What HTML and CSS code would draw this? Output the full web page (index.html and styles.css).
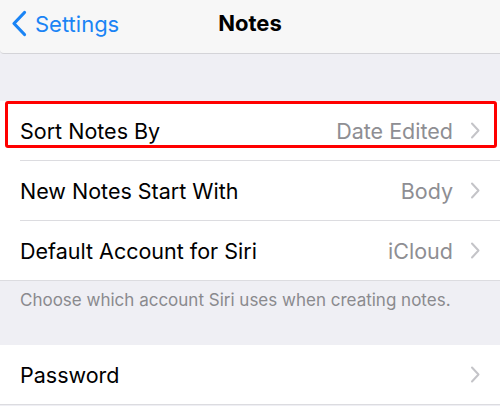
FILE: index.html
```html
<!DOCTYPE html>
<html>
<head>
<meta charset="utf-8">
<link rel="stylesheet" href="styles.css">
</head>
<body>
<header class="navbar">
  <a class="back">
    <svg class="back-icon" width="18" height="28" viewBox="0 0 18 28"><path d="M14.5 2.5 L4 13.5 L14.5 24.5" fill="none" stroke="#1a84f5" stroke-width="3.2" stroke-linecap="round" stroke-linejoin="round"/></svg>
    <span>Settings</span>
  </a>
  <h1 class="title">Notes</h1>
</header>
<div class="spacer"></div>
<section class="group">
  <div class="row">
    <div class="row-inner">
      <span class="label">Sort Notes By</span>
      <span class="value">Date Edited</span>
      <svg class="chev" width="11" height="17" viewBox="0 0 11 17"><path d="M2 1.5 L8.5 8.5 L2 15.5" fill="none" stroke="#c4c4c8" stroke-width="2" stroke-linecap="round" stroke-linejoin="round"/></svg>
    </div>
    <div class="highlight"></div>
  </div>
  <div class="row">
    <div class="row-inner">
      <span class="label">New Notes Start With</span>
      <span class="value">Body</span>
      <svg class="chev" width="11" height="17" viewBox="0 0 11 17"><path d="M2 1.5 L8.5 8.5 L2 15.5" fill="none" stroke="#c4c4c8" stroke-width="2" stroke-linecap="round" stroke-linejoin="round"/></svg>
    </div>
  </div>
  <div class="row last">
    <div class="row-inner">
      <span class="label">Default Account for Siri</span>
      <span class="value">iCloud</span>
      <svg class="chev" width="11" height="17" viewBox="0 0 11 17"><path d="M2 1.5 L8.5 8.5 L2 15.5" fill="none" stroke="#c4c4c8" stroke-width="2" stroke-linecap="round" stroke-linejoin="round"/></svg>
    </div>
  </div>
</section>
<p class="footnote">Choose which account Siri uses when creating notes.</p>
<section class="group">
  <div class="row last">
    <div class="row-inner">
      <span class="label">Password</span>
      <span class="value"></span>
      <svg class="chev" width="11" height="17" viewBox="0 0 11 17"><path d="M2 1.5 L8.5 8.5 L2 15.5" fill="none" stroke="#c4c4c8" stroke-width="2" stroke-linecap="round" stroke-linejoin="round"/></svg>
    </div>
  </div>
</section>
</body>
</html>
```
FILE: styles.css
```css
html, body {
  margin: 0;
  padding: 0;
}
body {
  background: #efeff4;
  font-family: Inter, "Noto Sans", sans-serif;
  width: 500px;
  height: 406px;
  overflow: hidden;
}
.navbar {
  height: 53px;
  background: #f7f7f7;
  border-bottom: 1px solid #d4d4d8;
  display: flex;
  align-items: center;
  justify-content: center;
  position: relative;
  border-bottom-left-radius: 4px;
}
.back {
  position: absolute;
  left: 10px;
  top: 10px;
  display: flex;
  align-items: center;
  gap: 7px;
  color: #1a84f5;
  font-size: 22px;
}
.back-icon {
  display: block;
}
.title {
  margin: 0;
  font-size: 22px;
  font-weight: 700;
  color: #000;
  margin-top: -7px;
}
.spacer {
  height: 47px;
}
.group {
  background: #fff;
}
.row {
  position: relative;
  padding-left: 20px;
}
.row-inner {
  height: 59px;
  display: flex;
  align-items: center;
  border-bottom: 1px solid #dcdce0;
  padding-right: 19px;
}
.row.last {
  padding-left: 0;
}
.row.last .row-inner {
  padding-left: 20px;
}
.label {
  font-size: 21.5px;
  color: #000;
  flex: 1;
}
.value {
  font-size: 21.5px;
  color: #8e8e93;
  margin-right: 17px;
}
.chev {
  display: block;
}
.highlight {
  position: absolute;
  left: 5px;
  right: 3px;
  top: 0;
  height: 47px;
  border: 3.5px solid #ff0000;
  border-radius: 3px;
  box-sizing: border-box;
}
.footnote {
  margin: 0;
  height: 64px;
  box-sizing: border-box;
  padding: 9px 20px 0;
  font-size: 17px;
  color: #8a8a8e;
}
```
